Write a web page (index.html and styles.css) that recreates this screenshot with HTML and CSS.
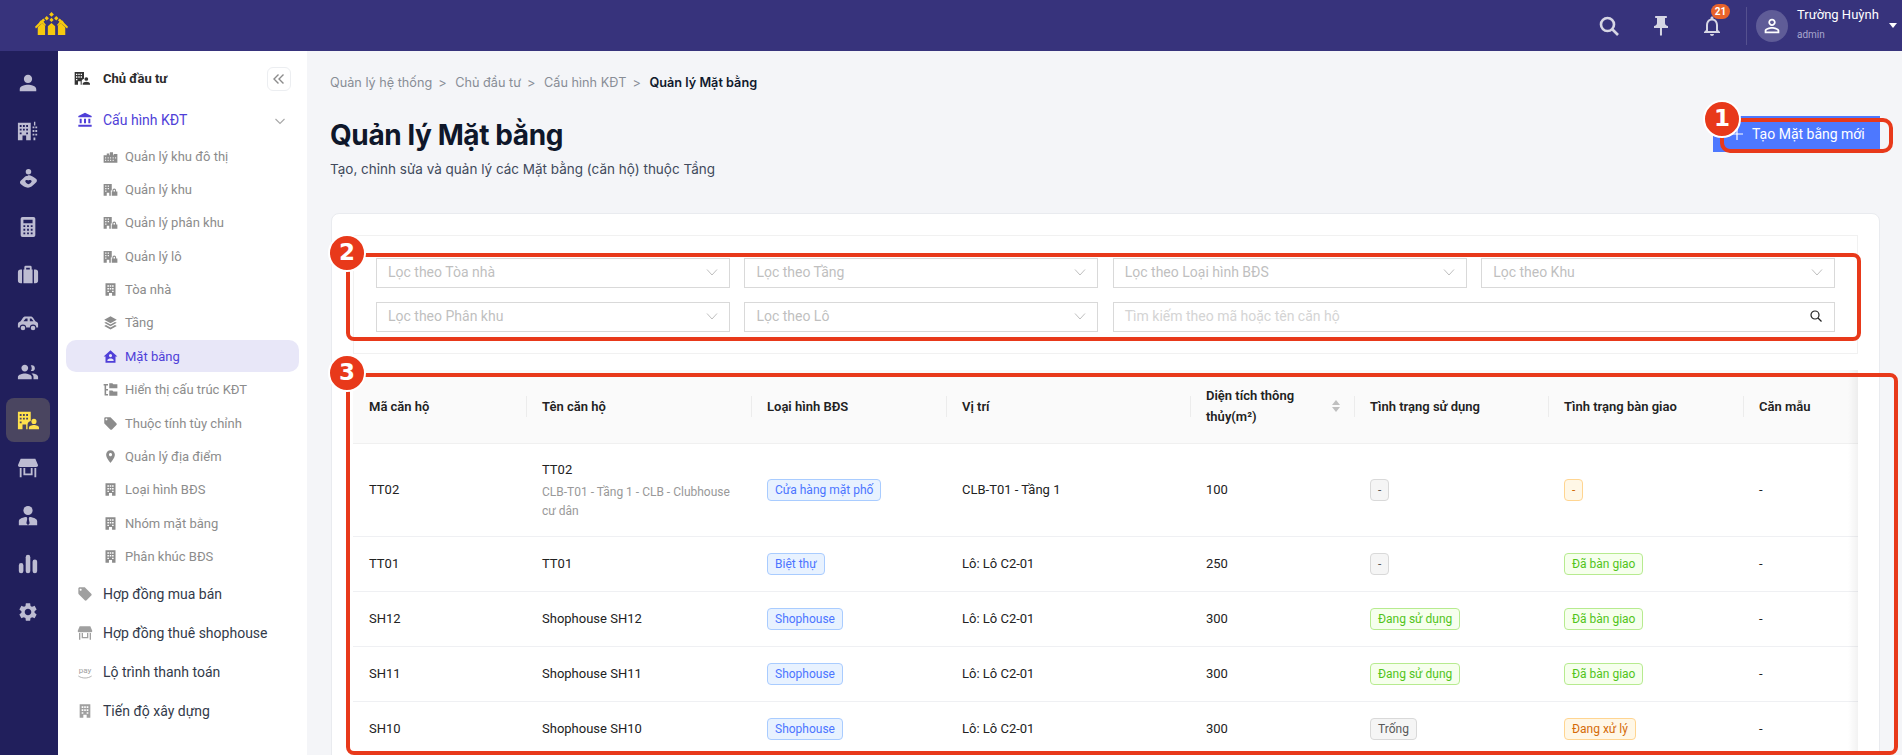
FILE: index.html
```html
<!DOCTYPE html>
<html lang="vi">
<head>
    <meta charset="UTF-8">
    <title>Quản lý Mặt bằng</title>
    <link rel="stylesheet" href="styles.css">
</head>
<body>
    <svg class="sprite" xmlns="http://www.w3.org/2000/svg">
        <symbol id="i-user" viewBox="0 0 24 24"><path d="M12 12c2.6 0 4.5-2 4.500-4.500S14.600 3 12 3 7.500 5 7.500 7.500 9.400 12 12 12zm0 2c-3 0-9 1.500-9 4.500V21h18v-2.500c0-3-6-4.500-9-4.500z"/></symbol>
        <symbol id="i-city" viewBox="0 0 24 24"><path fill-rule="evenodd" d="M1 3h14v19H10v-5H6v5H1zM3 5.500v2h2v-2zm3.500 0v2h2v-2zm3.500 0v2h2v-2zM3 9.500v2h2v-2zm3.500 0v2h2v-2zm3.500 0v2h2v-2zM3 13.500v2h2v-2zm7 0v2h2v-2z"/><path d="M18.500 2h1.500v4h-1.500zM17 7h2v2h-2zm3 0h2v2h-2zM17 11h2v2h-2zm3 0h2v2h-2zM17 15h2v2h-2zm3 0h2v2h-2zM18 19h2v3h-2z"/></symbol>
        <symbol id="i-hand" viewBox="0 0 24 24"><circle cx="12.500" cy="4" r="3"/><path fill-rule="evenodd" d="M12 8.500c-2 0-3.500 1-4.500 2L4 14c-1 1-1 2.500 0 3.500 2 2 5 4 8 4 3 0 5-2 7-4l2-2c1-1 1-2.500 0-3.500-1-1-2.500-2-4-2.800-1.500-.7-3-1.200-5-1.200zM9 14.500c0-1.200 2-1.800 3-.8 1-1 4-.6 4 .8 0 1.200-2 2.500-3.500 3.300C11 17 9 15.700 9 14.500z"/></symbol>
        <symbol id="i-calc" viewBox="0 0 24 24"><path fill-rule="evenodd" d="M6 1h12a2 2 0 012 2v18a2 2 0 01-2 2H6a2 2 0 01-2-2V3a2 2 0 012-2zm1 3v4h10V4zm0 6v2h2v-2zm4 0v2h2v-2zm4 0v2h2v-2zm-8 4v2h2v-2zm4 0v2h2v-2zm4 0v2h2v-2zm-8 4v2h2v-2zm4 0v2h2v-2zm4 0v2h2v-2z"/></symbol>
        <symbol id="i-case" viewBox="0 0 24 24"><path fill-rule="evenodd" d="M8 6V3.500A1.500 1.500 0 019.500 2h5A1.500 1.500 0 0116 3.500V6h1v15H7V6zm2 0h4V4h-4z"/><path d="M5.500 6H4a3 3 0 00-3 3v9a3 3 0 003 3h1.500zM18.500 6H20a3 3 0 013 3v9a3 3 0 01-3 3h-1.500z"/></symbol>
        <symbol id="i-car" viewBox="0 0 24 24"><path fill-rule="evenodd" d="M1 17v-4c0-1.600 1.500-2.500 3-3l2.500-3.600C7.200 5.500 8.200 5 9.200 5h5.600c1 0 2 .5 2.700 1.400L20 10c1.500.4 3 1.400 3 3v4h-2a3.500 3.500 0 00-7 0h-4a3.500 3.500 0 00-7 0zm8.500-10L7 10.200h4.500V7zm4.500 0v3.200h4L15.700 7z"/><circle cx="6.500" cy="17.500" r="2.500"/><circle cx="17.500" cy="17.500" r="2.500"/></symbol>
        <symbol id="i-group" viewBox="0 0 24 24"><path d="M16.500 11c1.660 0 3-1.340 3-3.200S18.160 4.500 16.500 4.500c-.6 0-1.100.1-1.500.4.700.8 1.100 1.800 1.100 2.900s-.4 2.200-1.100 2.900c.4.200.9.300 1.500.3zM8.500 11.500c2 0 3.700-1.700 3.700-3.800S10.500 4 8.500 4 4.800 5.600 4.800 7.700s1.700 3.800 3.700 3.800zm0 2c-2.500 0-7.500 1.300-7.500 3.800V20h15v-2.700c0-2.500-5-3.800-7.500-3.800zm8.300 0c-.3 0-.7 0-1 .1 1.200.9 2.200 2.100 2.200 3.700V20h5v-2.700c0-2.500-3.700-3.800-6.200-3.800z"/></symbol>
        <symbol id="i-owner" viewBox="0 0 24 24"><path fill-rule="evenodd" d="M1 3h14v10c-2 .6-3.500 2-3.500 4v5H10v-5H6v5H1zM3 5.500v2h2v-2zm3.500 0v2h2v-2zm3.500 0v2h2v-2zM3 9.500v2h2v-2zm3.500 0v2h2v-2zm3.500 0v2h2v-2zM3 13.500v2h2v-2z"/><circle cx="18.500" cy="13.500" r="2.800"/><path d="M13 22v-1.500c0-2 3-3 5.500-3s5.500 1 5.500 3V22z"/></symbol>
        <symbol id="i-store" viewBox="0 0 24 24"><path fill-rule="evenodd" d="M4 2h16l3 7a2 2 0 01-2 2H3a2 2 0 01-2-2zM3 12h2v10H3zm16 0h2v10h-2zM7 12h2v6h6v-6h2v8H7z"/></symbol>
        <symbol id="i-tie" viewBox="0 0 24 24"><circle cx="12" cy="6" r="5"/><path d="M10.500 13l.7 2-1 5 1.800 2 1.800-2-1-5 .7-2c3 .2 8.500 1.500 8.500 4.500V22H15h-6H2v-4.500c0-3 5.500-4.300 8.500-4.500z"/></symbol>
        <symbol id="i-chart" viewBox="0 0 24 24"><rect x="2" y="11" width="5" height="11" rx="2.500"/><rect x="9.500" y="2" width="5" height="20" rx="2.500"/><rect x="17" y="7" width="5" height="15" rx="2.500"/></symbol>
        <symbol id="i-gear" viewBox="0 0 24 24"><path d="M19.140 12.940c.04-.3.06-.61.06-.94 0-.32-.02-.64-.07-.94l2.030-1.580c.18-.14.23-.41.12-.61l-1.920-3.320c-.12-.22-.37-.29-.59-.22l-2.390.96c-.5-.38-1.030-.7-1.620-.94l-.36-2.540c-.04-.24-.24-.41-.48-.41h-3.840c-.24 0-.43.17-.47.41l-.36 2.540c-.59.24-1.130.57-1.620.94l-2.390-.96c-.22-.08-.47 0-.59.22L2.740 8.870c-.12.21-.08.47.12.61l2.030 1.580c-.05.3-.09.63-.09.94s.02.64.07.94l-2.030 1.580c-.18.14-.23.41-.12.61l1.920 3.320c.12.22.37.29.59.22l2.390-.96c.5.38 1.030.7 1.620.94l.36 2.540c.05.24.24.41.48.41h3.840c.24 0 .44-.17.47-.41l.36-2.540c.59-.24 1.130-.56 1.620-.94l2.390.96c.22.08.47 0 .59-.22l1.920-3.320c.12-.22.07-.47-.12-.61l-2.010-1.580zM12 15.600c-1.980 0-3.600-1.620-3.600-3.600s1.620-3.600 3.600-3.600 3.600 1.620 3.600 3.600-1.620 3.600-3.600 3.600z"/></symbol>
        <symbol id="i-bank" viewBox="0 0 24 24"><path d="M4 10h3v7H4zM10.500 10h3v7h-3zM2 19h20v3H2zM17 10h3v7h-3zM12 1L2 6v2h20V6z"/></symbol>
        <symbol id="i-tag" viewBox="0 0 24 24"><path d="M21.410 11.580l-9-9C12.050 2.220 11.550 2 11 2H4c-1.100 0-2 .9-2 2v7c0 .55.22 1.050.59 1.420l9 9c.36.36.86.58 1.410.58.55 0 1.050-.22 1.410-.59l7-7c.37-.36.59-.86.59-1.410 0-.55-.23-1.060-.59-1.420zM5.500 7C4.670 7 4 6.330 4 5.500S4.670 4 5.500 4 7 4.670 7 5.500 6.330 7 5.500 7z"/></symbol>
        <symbol id="i-pin" viewBox="0 0 24 24"><path d="M12 2C8.130 2 5 5.130 5 9c0 5.250 7 13 7 13s7-7.750 7-13c0-3.870-3.130-7-7-7zm0 9.500c-1.380 0-2.500-1.120-2.500-2.500s1.120-2.500 2.500-2.500 2.500 1.120 2.500 2.500-1.120 2.500-2.500 2.500z"/></symbol>
        <symbol id="i-towers" viewBox="0 0 24 24"><path fill-rule="evenodd" d="M1 10h5V7h4v3h1V5h5v5h1V8h6v14H1zm2.500 3v2H5v-2zm4 0v2H9v-2zm4 0v2H13v-2zm4 0v2H17v-2zm4 0v2H21v-2zm-16 4v2H5v-2zm4 0v2H9v-2zm4 0v2H13v-2zm4 0v2H17v-2z"/></symbol>
        <symbol id="i-lock" viewBox="0 0 24 24"><path fill-rule="evenodd" d="M1 3h13v10.500h-1.500V22H10v-5H6v5H1zM3.500 5.500v2h2v-2zm4 0v2h2v-2zm-4 4v2h2v-2zm4 0v2h2v-2zm-4 4v2h2v-2z"/><path fill-rule="evenodd" d="M15 15v-1.500a3 3 0 016 0V15h2v7h-9v-7zm1.800 0h2.400v-1.500a1.200 1.200 0 00-2.400 0z"/></symbol>
        <symbol id="i-block" viewBox="0 0 24 24"><path fill-rule="evenodd" d="M4 2h16v20h-5.500v-4.500h-5V22H4zM7 5v2.500h2.500V5zm3.800 0v2.500h2.400V5zm3.700 0v2.500H17V5zM7 9.500V12h2.500V9.500zm3.800 0V12h2.400V9.500zm3.700 0V12H17V9.500zM7 14v2h2.500v-2zm7.500 0v2H17v-2z"/></symbol>
        <symbol id="i-layers" viewBox="0 0 24 24"><path d="M12 2L2 7.500 12 13l10-5.500z"/><path d="M4.800 11L2 12.500 12 18l10-5.500-2.800-1.500-7.200 4z"/><path d="M4.800 16L2 17.500 12 23l10-5.500-2.800-1.500-7.200 4z"/></symbol>
        <symbol id="i-home" viewBox="0 0 24 24"><path fill-rule="evenodd" d="M12 2L1 12h3v10h16V12h3zm0 6a2.500 2.500 0 110 5 2.500 2.500 0 010-5zM7 19v-1c0-2 3-3 5-3s5 1 5 3v1z"/></symbol>
        <symbol id="i-tree" viewBox="0 0 24 24"><path d="M1 3h7v2.500H5V11h3v2.500H5V19h3v2.500H2.500V5.500H1z"/><path d="M10 2h5l1.500 1.500H23V10H10zM10 13.500h5l1.500 1.500H23v7H10z"/></symbol>
    </svg>

    <header class="topbar">
        <svg class="logo" width="33" height="23" viewBox="0 0 36 25" fill="#f6c90e">
            <path d="M18 0l2.600 2.600L18 5.200l-2.600-2.600zM12.800 4.300l2.400 2.400-2.400 2.400-2.400-2.400zM23.200 4.300l2.400 2.400-2.400 2.400-2.400-2.400zM18 6.300l2.300 2.300-2.300 2.300-2.300-2.300zM6.500 9l2 2-2 2-2-2zM29.500 9l2 2-2 2-2-2z"/>
            <path d="M0 16L9 7l2 2-1.700 1.700L12 14l-1 1-3-3-7 6zM36 16L27 7l-2 2 1.700 1.700L24 14l1 1 3-3 7 6z"/>
            <path d="M3 16.500l5-4.500 3 3v10H3zM14 15.500l4-3.500 4 3.500V25h-8zM25 15l3-3 5 4.500V25h-8z"/>
        </svg>
        <div class="top-actions">
            <svg class="top-icon search-icon" width="24" height="24" viewBox="0 0 24 24" fill="none" stroke="#d6d6e4" stroke-width="2.600"><circle cx="10.500" cy="10.500" r="6.500"/><path d="M15.500 15.500L21 21"/></svg>
            <svg class="top-icon pin-icon" width="24" height="24" viewBox="0 0 24 24" fill="#d6d6e4"><path d="M16 9V4h1c.55 0 1-.45 1-1s-.45-1-1-1H7c-.55 0-1 .45-1 1s.45 1 1 1h1v5c0 1.660-1.340 3-3 3v2h5.970v7l1 1 1-1v-7H19v-2c-1.660 0-3-1.340-3-3z"/></svg>
            <div class="bell">
                <svg width="24" height="24" viewBox="0 0 24 24" fill="#d6d6e4"><path d="M12 22c1.100 0 2-.9 2-2h-4c0 1.100.9 2 2 2zm6-6v-5c0-3.070-1.630-5.640-4.500-6.320V4c0-.83-.67-1.500-1.500-1.500s-1.500.67-1.500 1.500v.68C7.640 5.360 6 7.920 6 11v5l-2 2v1h16v-1l-2-2zm-2 1H8v-6c0-2.480 1.510-4.500 4-4.500s4 2.020 4 4.500v6z"/></svg>
                <span class="bell-count">21</span>
            </div>
            <div class="top-divider"></div>
            <div class="avatar">
                <svg width="22" height="22" viewBox="0 0 24 24" fill="#fff"><path d="M12 5.900c1.160 0 2.100.94 2.100 2.100s-.94 2.100-2.100 2.100S9.900 9.160 9.900 8s.94-2.100 2.100-2.100m0 9c2.970 0 6.100 1.460 6.100 2.100v1.100H5.900V17c0-.64 3.130-2.100 6.100-2.100M12 4C9.790 4 8 5.790 8 8s1.790 4 4 4 4-1.790 4-4-1.790-4-4-4zm0 9c-2.670 0-8 1.340-8 4v3h16v-3c0-2.660-5.330-4-8-4z"/></svg>
            </div>
            <div class="user">
                <div class="user-name">Trường Huỳnh</div>
                <div class="user-role">admin</div>
            </div>
            <span class="caret"></span>
        </div>
    </header>

    <div class="layout">
        <nav class="rail">
            <a class="rail-item"><svg><use href="#i-user"/></svg></a>
            <a class="rail-item"><svg><use href="#i-city"/></svg></a>
            <a class="rail-item"><svg><use href="#i-hand"/></svg></a>
            <a class="rail-item"><svg><use href="#i-calc"/></svg></a>
            <a class="rail-item"><svg><use href="#i-case"/></svg></a>
            <a class="rail-item"><svg><use href="#i-car"/></svg></a>
            <a class="rail-item"><svg><use href="#i-group"/></svg></a>
            <a class="rail-item active"><svg><use href="#i-owner"/></svg></a>
            <a class="rail-item"><svg><use href="#i-store"/></svg></a>
            <a class="rail-item"><svg><use href="#i-tie"/></svg></a>
            <a class="rail-item"><svg><use href="#i-chart"/></svg></a>
            <a class="rail-item"><svg><use href="#i-gear"/></svg></a>
        </nav>

        <aside class="sidebar">
            <div class="side-head">
                <svg class="head-icon"><use href="#i-owner"/></svg>
                <span class="side-title">Chủ đầu tư</span>
                <button class="collapse">
                    <svg width="14" height="14" viewBox="0 0 14 14" fill="none" stroke="#8c8c8c" stroke-width="1.400"><path d="M6.500 2.500L2 7l4.500 4.500M11.500 2.500L7 7l4.500 4.500"/></svg>
                </button>
            </div>

            <div class="menu-item open">
                <svg><use href="#i-bank"/></svg>
                <span>Cấu hình KĐT</span>
                <svg class="menu-chevron" viewBox="0 0 12 12" fill="none" stroke="#a8a8a8" stroke-width="1.100"><path d="M1.500 4l4.500 4.500L10.500 4"/></svg>
            </div>
            <div class="sub-item"><svg><use href="#i-towers"/></svg><span>Quản lý khu đô thị</span></div>
            <div class="sub-item"><svg><use href="#i-lock"/></svg><span>Quản lý khu</span></div>
            <div class="sub-item"><svg><use href="#i-lock"/></svg><span>Quản lý phân khu</span></div>
            <div class="sub-item"><svg><use href="#i-lock"/></svg><span>Quản lý lô</span></div>
            <div class="sub-item"><svg><use href="#i-block"/></svg><span>Tòa nhà</span></div>
            <div class="sub-item"><svg><use href="#i-layers"/></svg><span>Tầng</span></div>
            <div class="sub-item active"><svg><use href="#i-home"/></svg><span>Mặt bằng</span></div>
            <div class="sub-item"><svg><use href="#i-tree"/></svg><span>Hiển thị cấu trúc KĐT</span></div>
            <div class="sub-item"><svg><use href="#i-tag"/></svg><span>Thuộc tính tùy chỉnh</span></div>
            <div class="sub-item"><svg><use href="#i-pin"/></svg><span>Quản lý địa điểm</span></div>
            <div class="sub-item"><svg><use href="#i-block"/></svg><span>Loại hình BĐS</span></div>
            <div class="sub-item"><svg><use href="#i-block"/></svg><span>Nhóm mặt bằng</span></div>
            <div class="sub-item"><svg><use href="#i-block"/></svg><span>Phân khúc BĐS</span></div>
            <div class="menu-item"><svg><use href="#i-tag"/></svg><span>Hợp đồng mua bán</span></div>
            <div class="menu-item"><svg><use href="#i-store"/></svg><span>Hợp đồng thuê shophouse</span></div>
            <div class="menu-item">
                <svg viewBox="0 0 24 24"><text x="12" y="14" text-anchor="middle" font-family="Roboto" font-size="12" fill="#a0a0a0">pay</text><path d="M2 18c6 4 14 4 20 0" fill="none" stroke="#a0a0a0" stroke-width="1.200"/></svg>
                <span>Lộ trình thanh toán</span>
            </div>
            <div class="menu-item"><svg><use href="#i-block"/></svg><span>Tiến độ xây dựng</span></div>
        </aside>

        <main class="main">
            <div class="crumbs">
                <span>Quản lý hệ thống</span><i>&gt;</i>
                <span>Chủ đầu tư</span><i>&gt;</i>
                <span>Cấu hình KĐT</span><i>&gt;</i>
                <strong>Quản lý Mặt bằng</strong>
            </div>

            <div class="page-head">
                <div>
                    <h1>Quản lý Mặt bằng</h1>
                    <p>Tạo, chỉnh sửa và quản lý các Mặt bằng (căn hộ) thuộc Tầng</p>
                </div>
                <button class="btn-add">
                    <svg width="14" height="14" viewBox="0 0 14 14" stroke="#fff" stroke-width="1.200"><path d="M7 1v12M1 7h12"/></svg>
                    Tạo Mặt bằng mới
                </button>
            </div>

            <section class="card">
                <div class="filters">
                    <div class="field">Lọc theo Tòa nhà<svg class="chev" viewBox="0 0 12 12"><path d="M1 3.500l5 5.500 5-5.500"/></svg></div>
                    <div class="field">Lọc theo Tầng<svg class="chev" viewBox="0 0 12 12"><path d="M1 3.500l5 5.500 5-5.500"/></svg></div>
                    <div class="field">Lọc theo Loại hình BĐS<svg class="chev" viewBox="0 0 12 12"><path d="M1 3.500l5 5.500 5-5.500"/></svg></div>
                    <div class="field">Lọc theo Khu<svg class="chev" viewBox="0 0 12 12"><path d="M1 3.500l5 5.500 5-5.500"/></svg></div>
                    <div class="field">Lọc theo Phân khu<svg class="chev" viewBox="0 0 12 12"><path d="M1 3.500l5 5.500 5-5.500"/></svg></div>
                    <div class="field">Lọc theo Lô<svg class="chev" viewBox="0 0 12 12"><path d="M1 3.500l5 5.500 5-5.500"/></svg></div>
                    <div class="field field-search">Tìm kiếm theo mã hoặc tên căn hộ
                        <svg class="search-small" viewBox="0 0 14 14" fill="none" stroke="#222" stroke-width="1.200"><circle cx="6" cy="6" r="4"/><path d="M9 9l3.500 3.500"/></svg>
                    </div>
                </div>

                <div class="table-wrap">
                    <table>
                        <colgroup>
                            <col class="c-code"><col class="c-name"><col class="c-type"><col class="c-place">
                            <col class="c-area"><col class="c-use"><col class="c-hand"><col class="c-model">
                        </colgroup>
                        <thead>
                            <tr>
                                <th>Mã căn hộ</th>
                                <th>Tên căn hộ</th>
                                <th>Loại hình BĐS</th>
                                <th>Vị trí</th>
                                <th>
                                    <div class="th-sort">
                                        <span>Diện tích thông thủy(m²)</span>
                                        <svg width="10" height="14" viewBox="0 0 10 14" fill="#bfbfbf"><path d="M5 1l4 5H1zM1 8h8l-4 5z"/></svg>
                                    </div>
                                </th>
                                <th>Tình trạng sử dụng</th>
                                <th>Tình trạng bàn giao</th>
                                <th>Căn mẫu</th>
                            </tr>
                        </thead>
                        <tbody>
                            <tr class="row-tall">
                                <td>TT02</td>
                                <td class="name-cell">TT02<div class="sub-name">CLB-T01 - Tầng 1 - CLB - Clubhouse cư dân</div></td>
                                <td><span class="tag blue">Cửa hàng mặt phố</span></td>
                                <td>CLB-T01 - Tầng 1</td>
                                <td>100</td>
                                <td><span class="tag grey">-</span></td>
                                <td><span class="tag orange">-</span></td>
                                <td>-</td>
                            </tr>
                            <tr>
                                <td>TT01</td>
                                <td>TT01</td>
                                <td><span class="tag blue">Biệt thự</span></td>
                                <td>Lô: Lô C2-01</td>
                                <td>250</td>
                                <td><span class="tag grey">-</span></td>
                                <td><span class="tag green">Đã bàn giao</span></td>
                                <td>-</td>
                            </tr>
                            <tr>
                                <td>SH12</td>
                                <td>Shophouse SH12</td>
                                <td><span class="tag blue">Shophouse</span></td>
                                <td>Lô: Lô C2-01</td>
                                <td>300</td>
                                <td><span class="tag green">Đang sử dụng</span></td>
                                <td><span class="tag green">Đã bàn giao</span></td>
                                <td>-</td>
                            </tr>
                            <tr>
                                <td>SH11</td>
                                <td>Shophouse SH11</td>
                                <td><span class="tag blue">Shophouse</span></td>
                                <td>Lô: Lô C2-01</td>
                                <td>300</td>
                                <td><span class="tag green">Đang sử dụng</span></td>
                                <td><span class="tag green">Đã bàn giao</span></td>
                                <td>-</td>
                            </tr>
                            <tr>
                                <td>SH10</td>
                                <td>Shophouse SH10</td>
                                <td><span class="tag blue">Shophouse</span></td>
                                <td>Lô: Lô C2-01</td>
                                <td>300</td>
                                <td><span class="tag grey">Trống</span></td>
                                <td><span class="tag orange">Đang xử lý</span></td>
                                <td>-</td>
                            </tr>
                        </tbody>
                    </table>
                </div>
            </section>
        </main>
    </div>

    <!-- red callouts drawn over the screen -->
    <div class="frame frame-1"></div>
    <div class="frame frame-2"></div>
    <div class="frame frame-3"></div>
    <div class="step step-1">1</div>
    <div class="step step-2">2</div>
    <div class="step step-3">3</div>
</body>
</html>
```

FILE: styles.css
```css
* {
    box-sizing: border-box;
}
html, body {
    margin: 0;
    height: 755px;
    overflow: hidden;
}
body {
    position: relative;
    font-family: Roboto, sans-serif;
    font-size: 13px;
    color: #222;
    background: #f4f5f8;
}
.sprite {
    display: none;
}

/* top bar */
.topbar {
    height: 51px;
    background: #37337c;
    display: flex;
    align-items: center;
    justify-content: space-between;
    padding: 0 0 0 35px;
}
.logo {
    margin-top: -4px;
}
.top-actions {
    display: flex;
    align-items: center;
    height: 100%;
}
.top-icon {
    margin-right: 28px;
}
.bell {
    position: relative;
    width: 24px;
    height: 24px;
    margin-left: -1px;
}
.bell-count {
    position: absolute;
    top: -10px;
    left: 11px;
    width: 19px;
    height: 15px;
    border-radius: 8px;
    background: #e8632b;
    color: #fff;
    font-size: 10px;
    font-weight: 700;
    line-height: 15px;
    text-align: center;
}
.top-divider {
    width: 1px;
    height: 38px;
    background: #55518f;
    margin: 0 9px 0 22px;
}
.avatar {
    width: 32px;
    height: 32px;
    border-radius: 50%;
    background: #5f5c97;
    display: flex;
    align-items: center;
    justify-content: center;
}
.user {
    margin: 0 0 2px 9px;
    width: 92px;
}
.user-name {
    color: #fff;
    font-size: 13px;
    line-height: 16px;
}
.user-role {
    color: #a9a7cf;
    font-size: 10px;
    line-height: 14px;
    margin-top: 5px;
}
.caret {
    width: 0;
    height: 0;
    border-left: 4px solid transparent;
    border-right: 4px solid transparent;
    border-top: 5px solid #fff;
    margin-right: 5px;
}

.layout {
    display: flex;
    height: 704px;
}

/* icon rail */
.rail {
    width: 58px;
    flex: none;
    background: #211f5c;
    padding: 10px 0 0 6px;
    display: flex;
    flex-direction: column;
    gap: 4.100px;
}
.rail-item {
    width: 44px;
    height: 44px;
    border-radius: 8px;
    display: flex;
    align-items: center;
    justify-content: center;
    fill: #bdbcd2;
}
.rail-item svg {
    width: 22px;
    height: 22px;
}
.rail-item.active {
    background: #4a4560;
    fill: #ffe14d;
}

/* sidebar */
.sidebar {
    width: 249px;
    flex: none;
    background: #fff;
    padding: 16px 8px 0;
}
.side-head {
    display: flex;
    align-items: center;
    height: 24px;
    padding-left: 8px;
    margin-bottom: 10px;
}
.head-icon {
    width: 16px;
    height: 16px;
    fill: #333;
    margin: 0 13px 2px 0;
}
.side-title {
    font-size: 13px;
    font-weight: 700;
    color: #2b2b2b;
    flex: 1;
    padding-bottom: 2px;
}
.collapse {
    width: 24px;
    height: 24px;
    margin-right: 8px;
    padding: 0;
    background: #fff;
    border: 1px solid #eceef1;
    border-radius: 6px;
    display: flex;
    align-items: center;
    justify-content: center;
}
.menu-item {
    height: 39px;
    display: flex;
    align-items: center;
    padding-left: 11px;
    font-size: 14px;
    color: #333a4a;
    fill: #a0a0a0;
}
.menu-item svg {
    width: 16px;
    height: 16px;
    flex: none;
    margin-right: 10px;
}
.menu-item.open {
    color: #4f3fd8;
    fill: #4f3fd8;
    height: 37px;
    margin-bottom: 2px;
}
.menu-item span {
    flex: 1;
}
.menu-item .menu-chevron {
    width: 12px;
    height: 12px;
    margin: 3px 13px 0 0;
}
.sub-item {
    height: 32px;
    margin-bottom: 1.400px;
    display: flex;
    align-items: center;
    padding-left: 37px;
    border-radius: 10px;
    font-size: 13px;
    color: #8c8c8c;
    fill: #8c8c8c;
}
.sub-item svg {
    width: 15px;
    height: 15px;
    flex: none;
    margin-right: 7px;
}
.sub-item.active {
    background: #e8e7f8;
    color: #4f3fd8;
    fill: #4f3fd8;
}

/* main */
.main {
    flex: 1;
    min-width: 0;
    padding: 24px 22px 0 24px;
    overflow: hidden;
}
.crumbs {
    font-family: Inter, sans-serif;
    font-size: 12.700px;
    line-height: 16px;
    color: #888d96;
    margin-left: -1px;
}
.crumbs i {
    font-style: normal;
    margin: 0 5px 0 6px;
}
.crumbs strong {
    color: #111a2e;
    font-weight: 600;
}
.page-head {
    display: flex;
    justify-content: space-between;
    margin-top: 26px;
    height: 96px;
    align-items: flex-start;
}
.page-head h1 {
    font-family: Inter, sans-serif;
    font-size: 28px;
    font-weight: 700;
    letter-spacing: -0.400px;
    line-height: 36px;
    color: #0f172a;
    margin: 0 0 0 -1px;
}
.page-head p {
    font-family: Inter, sans-serif;
    font-size: 13.500px;
    line-height: 20px;
    color: #414a5c;
    margin: 6px 0 0 -1px;
}
.btn-add {
    height: 36px;
    width: 167px;
    margin-top: -1px;
    background: #4d78ff;
    border: 0;
    color: #fff;
    font-family: Roboto, sans-serif;
    font-size: 14px;
    display: flex;
    align-items: center;
    gap: 8px;
    padding: 0 0 0 17px;
}

.card {
    background: #fff;
    border: 1px solid #e9ebef;
    border-radius: 8px;
    padding: 21px 21px 0;
    height: 560px;
}
.filters {
    border: 1px solid #f1f1f1;
    padding: 22px 22px 21px;
    display: grid;
    grid-template-columns: repeat(4, 1fr);
    gap: 14px 14.500px;
    margin-bottom: 16px;
}
.field {
    height: 30px;
    border: 1px solid #d9d9d9;
    padding: 0 11px 2px;
    display: flex;
    align-items: center;
    justify-content: space-between;
    font-size: 14px;
    color: #bfbfbf;
}
.field-search {
    grid-column: span 2;
    color: #d4d4d4;
}
.chev {
    width: 12px;
    height: 12px;
    fill: none;
    stroke: #bfbfbf;
    stroke-width: 1;
}
.search-small {
    width: 14px;
    height: 14px;
}

/* table */
.table-wrap {
    position: relative;
    overflow: hidden;
}
.table-wrap::after {
    content: "";
    position: absolute;
    top: 0;
    right: 0;
    bottom: 0;
    width: 10px;
    background: linear-gradient(to right, rgba(0,0,0,0), rgba(0,0,0,.05));
}
table {
    width: 1505px;
    table-layout: fixed;
    border-collapse: collapse;
}
.c-code { width: 173px; }
.c-name { width: 225px; }
.c-type { width: 195px; }
.c-place { width: 244px; }
.c-area { width: 164px; }
.c-use { width: 194px; }
.c-hand { width: 195px; }
.c-model { width: 115px; }
th {
    height: 73px;
    padding: 0 16px;
    background-color: #fafafa;
    background-image: linear-gradient(#ececec, #ececec);
    background-size: 1px 21px;
    background-position: left center;
    background-repeat: no-repeat;
    border-bottom: 1px solid #f0f0f0;
    text-align: left;
    font-size: 13px;
    font-weight: 600;
    line-height: 21px;
    color: #222;
}
th:first-child {
    background-image: none;
}
.th-sort {
    display: flex;
    align-items: center;
    justify-content: space-between;
    margin-right: -3px;
}
.th-sort span {
    width: 110px;
}
td {
    height: 55px;
    padding: 0 16px;
    border-bottom: 1px solid #eff0f3;
    line-height: 19px;
    color: #222;
}
.row-tall td {
    height: 93px;
}
.row-tall .name-cell {
    padding-top: 1px;
}
.sub-name {
    font-size: 12px;
    line-height: 18.500px;
    color: #999;
    margin-top: 4px;
}
.tag {
    display: inline-block;
    height: 22px;
    padding: 0 7px;
    border: 1px solid;
    border-radius: 4px;
    font-size: 12px;
    line-height: 20px;
    vertical-align: middle;
}
.blue {
    background: #e8f2ff;
    border-color: #a9ccff;
    color: #4c75ff;
}
.green {
    background: #f6ffed;
    border-color: #b7eb8f;
    color: #52c41a;
}
.grey {
    background: #f5f5f5;
    border-color: #d9d9d9;
    color: #595959;
}
.orange {
    background: #fff7e6;
    border-color: #ffd591;
    color: #d46b08;
}

/* callouts */
.frame {
    position: absolute;
    border: 4px solid #e8391a;
    border-radius: 8px;
}
.frame-1 {
    left: 1720px;
    top: 118px;
    width: 173px;
    height: 35px;
    border-radius: 10px;
}
.frame-2 {
    left: 346px;
    top: 253px;
    width: 1515px;
    height: 88px;
}
.frame-3 {
    left: 346px;
    top: 373px;
    width: 1552px;
    height: 382px;
}
.step {
    position: absolute;
    width: 38px;
    height: 38px;
    border: 2px solid #fff;
    border-radius: 50%;
    background: #e8391a;
    color: #fff;
    font-family: "DejaVu Sans", sans-serif;
    font-size: 23px;
    font-weight: 700;
    line-height: 33px;
    text-align: center;
}
.step-1 { left: 1703px; top: 100px; }
.step-2 { left: 328px; top: 234px; }
.step-3 { left: 328px; top: 354px; }
```
